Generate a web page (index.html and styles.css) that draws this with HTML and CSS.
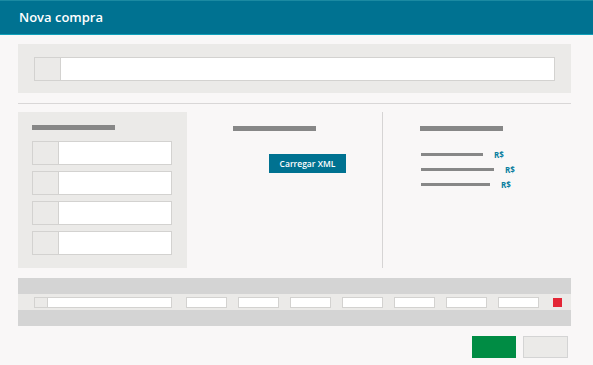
FILE: index.html
```html
<!DOCTYPE html>
<html lang="pt">
<head>
<title>Nova compra</title>
<meta name="viewport" content="width=device-width, initial-scale=1.0">
<link rel="stylesheet" href="styles.css">
</head>
<body>
<div class="topo">Nova compra</div>

<div class="conteudo">
    <div class="busca">
        <div class="campo"><span class="prefixo"></span></div>
    </div>

    <div class="divisor"></div>

    <div class="colunas">
        <div class="painel">
            <div class="titulo"></div>
            <div class="lista-campos">
                <div class="campo"><span class="prefixo"></span></div>
                <div class="campo"><span class="prefixo"></span></div>
                <div class="campo"><span class="prefixo"></span></div>
                <div class="campo"><span class="prefixo"></span></div>
            </div>
        </div>

        <div class="coluna-meio">
            <div class="titulo"></div>
            <div class="btn-xml">Carregar XML</div>
        </div>

        <div class="separador"></div>

        <div class="coluna-direita">
            <div class="titulo"></div>
            <div class="totais">
                <div class="linha-total"><span class="traco" style="width: 62px"></span><span class="moeda">R$</span></div>
                <div class="linha-total"><span class="traco" style="width: 73px"></span><span class="moeda">R$</span></div>
                <div class="linha-total"><span class="traco" style="width: 69px"></span><span class="moeda">R$</span></div>
            </div>
        </div>
    </div>

    <div class="tabela">
        <div class="cabecalho"></div>
        <div class="linha">
            <div class="campo campo-item"><span class="prefixo"></span></div>
            <div class="campo campo-num"></div>
            <div class="campo campo-num"></div>
            <div class="campo campo-num"></div>
            <div class="campo campo-num"></div>
            <div class="campo campo-num"></div>
            <div class="campo campo-num"></div>
            <div class="campo campo-num"></div>
            <div class="remover"></div>
        </div>
        <div class="rodape"></div>
    </div>

    <div class="acoes">
        <div class="btn-salvar"></div>
        <div class="btn-cancelar"></div>
    </div>
</div>
</body>
</html>
```

FILE: styles.css
```css
body {
    margin: 0;
    background: #f9f7f7;
    font-family: "Open Sans", sans-serif;
}

.topo {
    height: 33px;
    background: #007291;
    border-top: 1px solid #1b8aa2;
    border-bottom: 1px solid #12a0b9;
    color: white;
    font-size: 13px;
    font-weight: 600;
    line-height: 33px;
    padding-left: 19px;
}

.conteudo {
    padding: 0 22px 0 18px;
}

.busca {
    margin-top: 9px;
    height: 49px;
    box-sizing: border-box;
    background: #ebeae8;
    padding: 13px 16px 0 16px;
}

.campo {
    display: flex;
    height: 24px;
    box-sizing: border-box;
    background: white;
    border: 1px solid #d3d2d0;
}

.prefixo {
    width: 25px;
    background: #ebeae8;
    border-right: 1px solid #d3d2d0;
}

.divisor {
    margin-top: 10px;
    height: 1px;
    background: #d9d7d7;
}

.colunas {
    margin-top: 8px;
    height: 156px;
    display: grid;
    grid-template-columns: 169px 195px 1px 1fr;
}

.titulo {
    width: 83px;
    height: 5px;
    background: #878787;
}

.painel {
    background: #ebeae8;
    padding: 13px 15px 0 14px;
}

.lista-campos {
    margin-top: 11px;
    display: flex;
    flex-direction: column;
    gap: 6px;
}

.coluna-meio {
    padding: 14px 0 0 46px;
}

.btn-xml {
    margin: 23px 0 0 36px;
    width: 77px;
    height: 19px;
    background: #007291;
    color: white;
    font-size: 8.5px;
    font-weight: 600;
    line-height: 19px;
    text-align: center;
}

.separador {
    background: #d6d4d4;
}

.coluna-direita {
    padding: 14px 0 0 37px;
}

.totais {
    margin-top: 19px;
    margin-left: 1px;
    display: flex;
    flex-direction: column;
    gap: 7px;
}

.linha-total {
    display: flex;
    align-items: center;
    gap: 11px;
    height: 8px;
}

.traco {
    height: 3px;
    background: #878787;
}

.moeda {
    color: #0a7f9f;
    font-size: 8px;
    font-weight: 700;
}

.tabela {
    margin-top: 10px;
}

.cabecalho,
.rodape {
    height: 16px;
    background: #d4d4d4;
}

.linha {
    height: 16px;
    background: #ebeae8;
    display: flex;
    align-items: center;
    gap: 11px;
    padding-left: 16px;
}

.linha .campo {
    height: 11px;
}

.campo-item {
    width: 138px;
    margin-right: 3px;
}

.campo-item .prefixo {
    width: 12px;
}

.campo-num {
    width: 41px;
}

.remover {
    margin-left: 3px;
    width: 9px;
    height: 9px;
    background: #e32636;
}

.acoes {
    margin-top: 10px;
    display: flex;
    justify-content: flex-end;
    gap: 7px;
    padding-right: 3px;
}

.btn-salvar {
    width: 44px;
    height: 22px;
    background: #008c44;
}

.btn-cancelar {
    width: 45px;
    height: 22px;
    box-sizing: border-box;
    background: #ebeae8;
    border: 1px solid #d4d4d4;
}
```
